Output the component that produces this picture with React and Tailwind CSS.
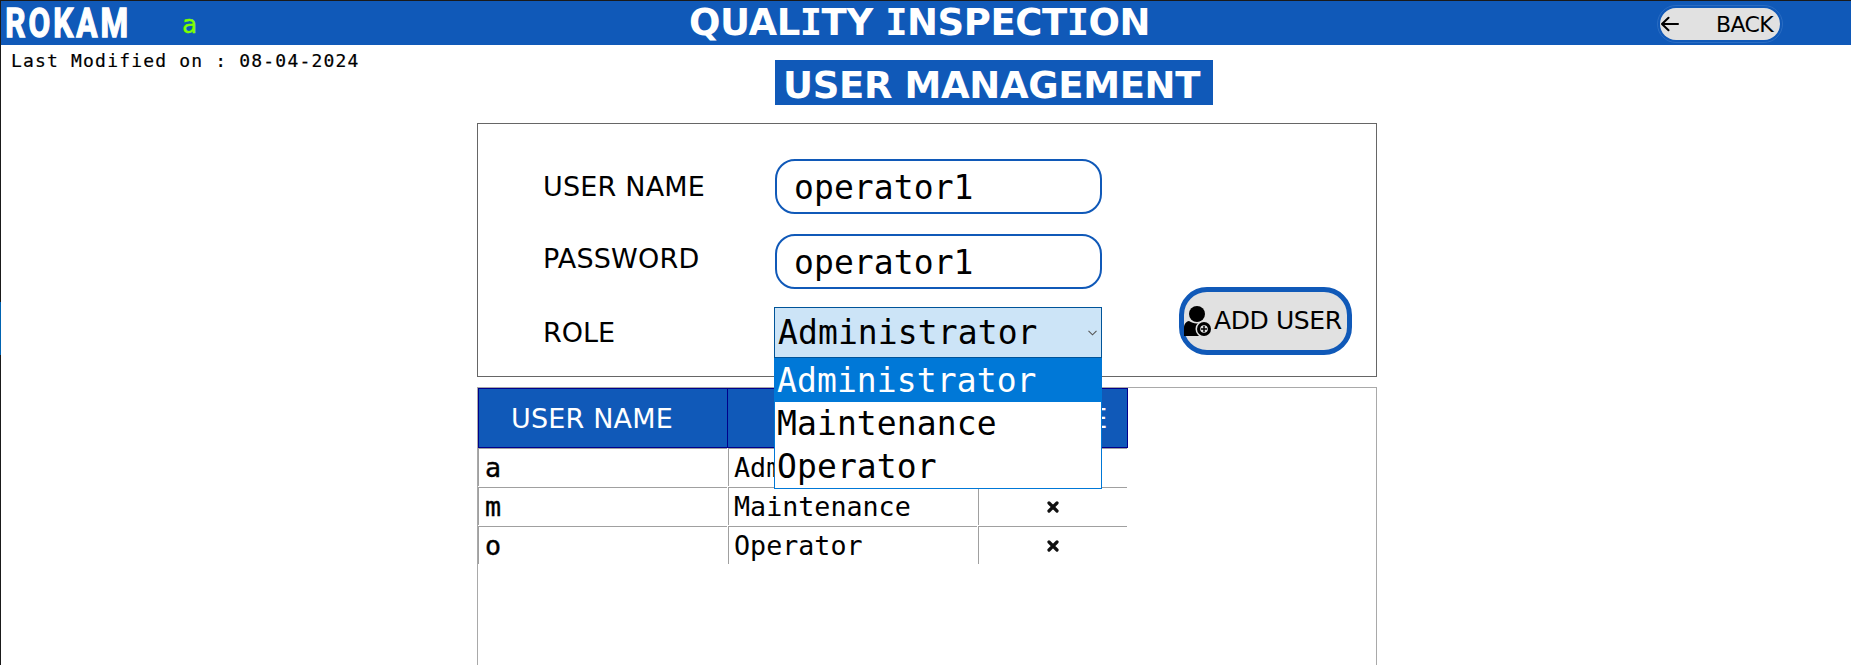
import React from "react";

const users = [
  { name: "a", role: "Administrator" },
  { name: "m", role: "Maintenance" },
  { name: "o", role: "Operator" },
];

const roles = ["Administrator", "Maintenance", "Operator"];

function Logo() {
  return (
    <svg className="ml-[4px] mt-[4px] h-[36px] w-[140px] shrink-0 overflow-visible" viewBox="0 0 140 36">
      <text
        x="0.2"
        y="32.2"
        fill="#fff"
        stroke="#fff"
        strokeWidth="1.4"
        fontFamily="'Liberation Sans Narrow', 'Roboto', sans-serif"
        fontWeight="700"
        fontSize="41.5"
        letterSpacing="4"
        textLength="126"
        lengthAdjust="spacingAndGlyphs"
      >
        ROKAM
      </text>
    </svg>
  );
}

function SlabI() {
  return <span className="font-['DejaVu_Sans_Mono',monospace]">I</span>;
}

function Header() {
  return (
    <header className="flex h-[45px] border-t border-[#1a1a1a] bg-[#1059b8]">
      <Logo />
      <span className="ml-[37px] mt-[4px] w-[20px] font-['DejaVu_Sans_Mono',monospace] text-[25px] leading-[40px] text-[#7fff00] [-webkit-text-stroke:0.4px]">
        a
      </span>
      <h1 className="ml-[487px] mt-px w-[480px] whitespace-nowrap text-[37px] font-bold leading-[42px] tracking-[-0.45px] text-white">
        QUAL<SlabI />TY <SlabI />NSPECT<SlabI />ON
      </h1>
      <button className="ml-[488px] mt-[4px] flex h-[38px] w-[126px] items-center rounded-[19px] border border-[#2a6cc2] p-[2px]">
        <span className="flex h-[32px] w-[120px] items-center rounded-[16px] bg-[#e1e1e1]">
          <svg className="ml-px h-[16px] w-[18px]" viewBox="0 0 18 16" fill="none" stroke="#000" strokeWidth="2" strokeLinecap="round">
            <path d="M1 8H17M7.5 1.8L1 8L7.5 14.2" />
          </svg>
          <span className="ml-[37px] mt-px text-[22px] leading-[32px] tracking-[-0.6px]">BACK</span>
        </span>
      </button>
    </header>
  );
}

function Field({ label, value, labelClass }) {
  return (
    <div className="flex h-[56px] items-start">
      <label className={"w-[232px] text-[27px] leading-[32px] tracking-[0.2px] " + labelClass}>{label}</label>
      <div className="flex h-[55px] w-[327px] items-center rounded-[20px] border-2 border-[#1059b8] bg-white pl-[17px] pt-[2px] font-['DejaVu_Sans_Mono',monospace] text-[33px] leading-[40px] tracking-[0.08px]">
        {value}
      </div>
    </div>
  );
}

function RoleSelect() {
  return (
    <div className="relative -ml-px w-[328px] font-['DejaVu_Sans_Mono',monospace] text-[33px] leading-[43px] tracking-[0.1px]">
      <div className="flex h-[51px] items-center justify-between border border-[#005499] bg-[#cce4f7] pl-[3px] pr-[4px]">
        <span>Administrator</span>
        <svg className="h-[6px] w-[9px]" viewBox="0 0 9 6" fill="none" stroke="#555" strokeWidth="1.1">
          <path d="M0.5 0.8L4.5 4.8L8.5 0.8" />
        </svg>
      </div>
      <ul className="absolute left-0 top-[51px] z-10 w-[328px] border border-[#0078d7] bg-white">
        {roles.map((role, i) => (
          <li key={role} className={"h-[43px] pl-[2px] " + (i === 0 ? "bg-[#0078d7] text-white" : "")}>
            {role}
          </li>
        ))}
      </ul>
    </div>
  );
}

function AddUserButton() {
  return (
    <button className="-mt-[20px] ml-[77px] flex h-[68px] w-[173px] items-center rounded-[28px] border-[5px] border-[#1059b8] bg-[#e1e1e1]">
      <svg className="h-[30px] w-[27px] shrink-0" viewBox="0 0 27 30">
        <circle cx="13" cy="8" r="8" />
        <path d="M0 30V22C0 18 2 15.5 5 15C10 18.5 16 18 20 15L22 30Z" />
        <circle cx="20" cy="23" r="8.5" fill="#e1e1e1" />
        <circle cx="20" cy="23" r="7" />
        <circle cx="20" cy="23" r="3.8" fill="#e1e1e1" />
        <path d="M20 20V26M17 23H23" stroke="#000" strokeWidth="1.5" />
      </svg>
      <span className="ml-[3px] whitespace-nowrap text-[25px] leading-[30px] tracking-[-0.4px]">ADD USER</span>
    </button>
  );
}

function UserForm() {
  return (
    <section className="ml-[476px] mt-[18px] h-[254px] w-[900px] border border-[#666] pl-[65px] pt-[35px]">
      <Field label="USER NAME" value="operator1" labelClass="mt-[12px]" />
      <div className="h-[19px]" />
      <Field label="PASSWORD" value="operator1" labelClass="mt-[9px]" />
      <div className="mt-[17px] flex h-[51px] items-start">
        <label className="mt-[10px] w-[232px] text-[27px] leading-[32px]">ROLE</label>
        <RoleSelect />
        <AddUserButton />
      </div>
    </section>
  );
}

function UserTable() {
  return (
    <section className="ml-[476px] mt-[10px] h-[300px] w-[900px] border border-[#a9a9a9]">
      <div className="grid h-[60px] w-[650px] grid-cols-[250px_250px_150px] grid-rows-[60px] text-center text-[27px] leading-[59px] text-white">
        <div className="border border-[#00008b] bg-[#1059b8] pr-[22px] tracking-[0.2px]">USER NAME</div>
        <div className="border-y border-r border-[#00008b] bg-[#1059b8]">ROLE</div>
        <div className="border-y border-r border-[#00008b] bg-[#1059b8] pl-[6px]">DELETE</div>
      </div>
      {users.map((user) => (
        <div
          key={user.name}
          className="grid h-[39px] w-[649px] grid-cols-[249px_249px_149px] grid-rows-[38px] gap-x-px font-['DejaVu_Sans_Mono',monospace] text-[26.7px] leading-[38px]"
        >
          <div className="border-l border-t border-[#a0a0a0] pl-[6px] [-webkit-text-stroke:0.4px]">{user.name}</div>
          <div className="border-l border-t border-[#a0a0a0] pl-[5px]">{user.role}</div>
          <div className="flex items-center justify-center border-l border-t border-[#a0a0a0]">
            <svg className="h-[12px] w-[12px]" viewBox="0 0 12 12" stroke="#111" strokeWidth="3.2" strokeLinecap="round">
              <path d="M2 2L10 10M10 2L2 10" />
            </svg>
          </div>
        </div>
      ))}
    </section>
  );
}

export default function App() {
  return (
    <div className="flex h-[665px] w-[1851px] overflow-hidden bg-white font-['DejaVu_Sans',sans-serif] text-black">
      <div className="flex w-px shrink-0 flex-col bg-[#1a1a1a]">
        <div className="mt-[302px] h-[53px] bg-[#0063b1]" />
      </div>
      <main className="w-[1850px] shrink-0">
        <Header />
        <div className="flex h-[60px]">
          <p className="ml-[10px] mt-[6px] w-[764px] whitespace-nowrap font-['DejaVu_Sans_Mono',monospace] text-[18px] leading-[20px] tracking-[1.18px] [-webkit-text-stroke:0.2px]">
            Last Modified on : 08-04-2024
          </p>
          <h2 className="mt-[15px] h-[45px] w-[438px] whitespace-nowrap bg-[#1059b8] pl-[8px] pt-[3px] text-[37px] font-bold leading-[45px] tracking-[-0.35px] text-white">
            USER MANAGEMENT
          </h2>
        </div>
        <UserForm />
        <UserTable />
      </main>
    </div>
  );
}
